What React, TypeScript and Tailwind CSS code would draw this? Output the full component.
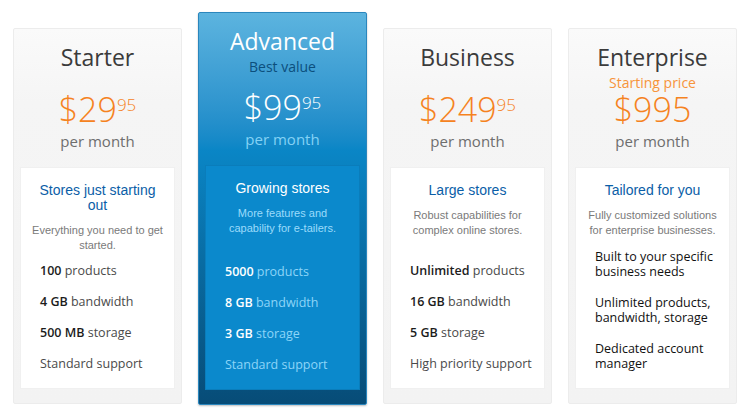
type Feature = { strong?: string; text: string };

type Plan = {
  name: string;
  sub?: string;
  price: string;
  cents?: string;
  heading: string;
  blurb: string;
  features: Feature[];
  featured?: boolean;
  priceGap: string;
};

const plans: Plan[] = [
  {
    name: 'Starter',
    price: '$29',
    cents: '95',
    heading: 'Stores just starting out',
    blurb: 'Everything you need to get started.',
    features: [
      { strong: '100', text: 'products' },
      { strong: '4 GB', text: 'bandwidth' },
      { strong: '500 MB', text: 'storage' },
      { text: 'Standard support' },
    ],
    priceGap: 'mt-[20px]',
  },
  {
    name: 'Advanced',
    sub: 'Best value',
    price: '$99',
    cents: '95',
    heading: 'Growing stores',
    blurb: 'More features and capability for e-tailers.',
    features: [
      { strong: '5000', text: 'products' },
      { strong: '8 GB', text: 'bandwidth' },
      { strong: '3 GB', text: 'storage' },
      { text: 'Standard support' },
    ],
    featured: true,
    priceGap: 'mt-[15px]',
  },
  {
    name: 'Business',
    price: '$249',
    cents: '95',
    heading: 'Large stores',
    blurb: 'Robust capabilities for complex online stores.',
    features: [
      { strong: 'Unlimited', text: 'products' },
      { strong: '16 GB', text: 'bandwidth' },
      { strong: '5 GB', text: 'storage' },
      { text: 'High priority support' },
    ],
    priceGap: 'mt-[20px]',
  },
  {
    name: 'Enterprise',
    sub: 'Starting price',
    price: '$995',
    heading: 'Tailored for you',
    blurb: 'Fully customized solutions for enterprise businesses.',
    features: [
      { text: 'Built to your specific business needs' },
      { text: 'Unlimited products, bandwidth, storage' },
      { text: 'Dedicated account manager' },
    ],
    priceGap: 'mt-[1px]',
  },
];

function PlanCard({ plan }: { plan: Plan }) {
  const hot = plan.featured;
  const plain = plan.name === 'Enterprise';

  return (
    <div
      className={
        hot
          ? 'flex h-[393px] w-[169px] flex-col rounded-[2px] border border-[#2a86bd] bg-linear-to-b from-[#5cb4df] via-[#0a86c6] via-35% to-[#074c77] shadow-[0_1px_2px_rgba(0,0,0,0.25)]'
          : 'mt-[16px] flex h-[376px] w-[169px] flex-col rounded-[2px] border border-[#ececec] bg-linear-to-b from-[#fafafa] via-[#f5f5f5] via-20% to-[#f3f3f3]'
      }
    >
      <div className="flex flex-col items-center font-['Open_Sans',sans-serif]">
        <h2
          className={`pt-[13px] text-[23px] leading-[30px] font-normal ${
            hot ? 'text-white' : 'text-[#3b3b3b]'
          }`}
        >
          {plan.name}
        </h2>
        {plan.sub && (
          <div
            className={`mt-[3px] text-[14px] leading-[16px] ${
              hot ? 'text-[#0c4f7d]' : 'text-[#f7943a]'
            }`}
          >
            {plan.sub}
          </div>
        )}
        <div
          className={`flex h-[34px] items-start justify-center leading-[34px] ${plan.priceGap} ${
            hot ? 'text-white' : 'text-[#f5831f]'
          }`}
        >
          <span className="text-[34px] font-light">{plan.price}</span>
          {plan.cents && (
            <span className="-mt-[4px] text-[17px] font-light">{plan.cents}</span>
          )}
        </div>
        <div
          className={`mt-[5px] text-[15px] leading-[20px] ${
            hot ? 'text-[#84d2f5]' : 'text-[#6e6e6e]'
          }`}
        >
          per month
        </div>
      </div>

      <div
        className={`mx-[6px] mt-[16px] mb-[14px] flex flex-1 flex-col ${
          hot ? 'border border-[#0a7dbb] bg-[#0b89cc]' : 'border border-[#f0f0f0] bg-white'
        }`}
      >
        <div className="px-[10px] pt-[15px] text-center font-['Liberation_Sans',Arial,sans-serif]">
          <h3
            className={`text-[14px] leading-[15px] ${
              hot ? 'text-white' : 'text-[#0b5ea7]'
            }`}
          >
            {plan.heading}
          </h3>
          <p
            className={`mt-[10px] text-[11px] leading-[15px] ${
              hot ? 'text-[#9bdbfb]' : 'text-[#7a7a7a]'
            }`}
          >
            {plan.blurb}
          </p>
        </div>

        <ul className="mt-auto flex flex-col gap-[16px] pr-[6px] pb-[17px] pl-[19px] font-['Open_Sans',sans-serif] text-[12.5px] leading-[15px]">
          {plan.features.map((f) => (
            <li
              key={f.text}
              className={
                hot
                  ? 'text-[#8dd5f8]'
                  : plain
                    ? 'font-medium text-[#111111]'
                    : 'text-[#4a4a4a]'
              }
            >
              {f.strong && (
                <span className={`font-semibold ${hot ? 'text-white' : 'text-[#1c1c1c]'}`}>
                  {f.strong}{' '}
                </span>
              )}
              {f.text}
            </li>
          ))}
        </ul>
      </div>
    </div>
  );
}

export default function App() {
  return (
    <div className="h-[413px] w-[750px] overflow-hidden bg-white pt-[12px]">
      <div className="flex items-start gap-[16px] pl-[13px]">
        {plans.map((p) => (
          <PlanCard key={p.name} plan={p} />
        ))}
      </div>
    </div>
  );
}
